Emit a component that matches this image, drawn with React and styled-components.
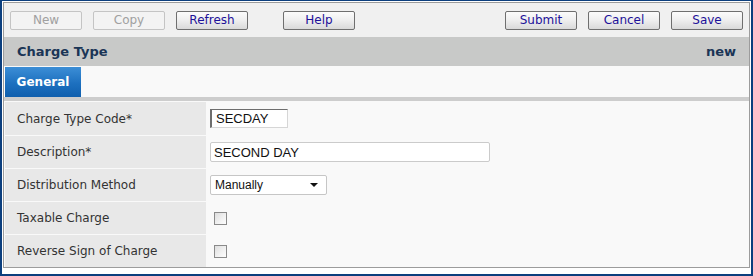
import React from "react";
import styled, { createGlobalStyle } from "styled-components";

const GlobalStyle = createGlobalStyle`
  html, body {
    margin: 0;
    padding: 0;
    background: #ffffff;
  }
  body {
    font-family: "DejaVu Sans", Verdana, sans-serif;
  }
`;

const Frame = styled.div`
  box-sizing: border-box;
  width: 753px;
  height: 276px;
  border: 2px solid #0c3f7e;
  border-top-width: 1px;
  background: #ffffff;
  padding: 1px;
`;

const Panel = styled.div`
  border: 1px solid #9c9c9c;
  background: #f9f9f9;
`;

const Toolbar = styled.div`
  display: flex;
  align-items: center;
  height: 34px;
  padding: 0 6px 0 6px;
  background: #f0f0f0;
`;

const ButtonGroup = styled.div`
  display: flex;
  gap: 11px;
  margin-left: ${(p) => p.$offset || 0}px;
`;

const Spacer = styled.div`
  flex: 1;
`;

const Button = styled.button`
  box-sizing: border-box;
  width: 72px;
  height: 19px;
  padding: 0;
  border: 1px solid ${(p) => (p.disabled ? "#c4c4c4" : "#6f6f6f")};
  border-radius: 2px;
  background: ${(p) =>
    p.disabled
      ? "#f3f3f3"
      : "linear-gradient(#fbfbfb 0%, #f0f0f0 45%, #d9d9d9 100%)"};
  color: ${(p) => (p.disabled ? "#a0a0a0" : "#1d1199")};
  font-family: "DejaVu Sans", Verdana, sans-serif;
  font-size: 12px;
  line-height: 17px;
  cursor: default;
`;

const Header = styled.div`
  display: flex;
  justify-content: space-between;
  align-items: center;
  height: 28px;
  padding: 0 13px 1px 13px;
  background: #c8c9c8;
  color: #1b3556;
  font-size: 13px;
  font-weight: bold;
`;

const TabStrip = styled.div`
  display: flex;
  height: 30px;
  padding: 1px 0 0 1px;
  background: #f9f9f9;
  border-bottom: 4px solid #cdcdcd;
`;

const Tab = styled.div`
  display: flex;
  align-items: center;
  justify-content: center;
  width: 76px;
  background: linear-gradient(#3c8ed6 0%, #1d70bf 55%, #0f5fae 100%);
  color: #ffffff;
  font-size: 12px;
  font-weight: bold;
`;

const Form = styled.div`
  padding-top: 1px;
`;

const Row = styled.div`
  display: grid;
  grid-template-columns: 201px 1fr;
  height: 33px;
  border-top: ${(p) => (p.$first ? "none" : "1px solid #f9f9f9")};
  box-sizing: border-box;
  margin-left: 1px;
`;

const Label = styled.div`
  display: flex;
  align-items: center;
  padding-left: 12px;
  background: #e8e8e8;
  color: #333333;
  font-size: 12px;
`;

const Value = styled.div`
  display: flex;
  align-items: center;
  padding-left: 4px;
  background: #f9f9f9;
`;

const TextBox = styled.div`
  box-sizing: border-box;
  width: ${(p) => p.$width}px;
  height: ${(p) => (p.$inset ? 19 : 20)}px;
  margin-top: ${(p) => (p.$inset ? -1 : 0)}px;
  display: flex;
  align-items: center;
  padding-left: ${(p) => (p.$inset ? 4 : 3)}px;
  background: #ffffff;
  border: 1px solid #cbcbcb;
  border-radius: ${(p) => (p.$inset ? 0 : 2)}px;
  ${(p) =>
    p.$inset &&
    `border-color: #6e6e6e #d6d6d6 #d6d6d6 #6e6e6e; border-width: 1px 1px 1px 2px;`}
  color: #111111;
  font-family: "Liberation Sans", Arial, sans-serif;
  font-size: 13px;
`;

const SelectBox = styled.div`
  box-sizing: border-box;
  width: 117px;
  height: 20px;
  display: flex;
  align-items: center;
  justify-content: space-between;
  padding: 0 8px 0 4px;
  background: #ffffff;
  border: 1px solid #c6c6c6;
  border-radius: 2px;
  color: #111111;
  font-family: "Liberation Sans", Arial, sans-serif;
  font-size: 12px;
`;

const Caret = styled.span`
  width: 0;
  height: 0;
  border-left: 4px solid transparent;
  border-right: 4px solid transparent;
  border-top: 4px solid #111111;
`;

const CheckBox = styled.span`
  box-sizing: border-box;
  display: inline-block;
  width: 13px;
  height: 13px;
  margin-left: 4px;
  margin-top: 1px;
  border: 1px solid #8a8a8a;
  background: linear-gradient(135deg, #dedede 0%, #f2f2f2 60%, #fdfdfd 100%);
`;

const fields = [
  { label: "Charge Type Code*", type: "code", value: "SECDAY" },
  { label: "Description*", type: "text", value: "SECOND DAY" },
  { label: "Distribution Method", type: "select", value: "Manually" },
  { label: "Taxable Charge", type: "check" },
  { label: "Reverse Sign of Charge", type: "check" },
];

function Field({ field }) {
  if (field.type === "code")
    return (
      <TextBox $width={78} $inset>
        {field.value}
      </TextBox>
    );
  if (field.type === "text") return <TextBox $width={280}>{field.value}</TextBox>;
  if (field.type === "select")
    return (
      <SelectBox>
        {field.value}
        <Caret />
      </SelectBox>
    );
  return <CheckBox />;
}

export default function App() {
  return (
    <>
      <GlobalStyle />
      <Frame>
        <Panel>
          <Toolbar>
            <ButtonGroup>
              <Button disabled>New</Button>
              <Button disabled>Copy</Button>
              <Button>Refresh</Button>
            </ButtonGroup>
            <ButtonGroup $offset={35}>
              <Button>Help</Button>
            </ButtonGroup>
            <Spacer />
            <ButtonGroup>
              <Button>Submit</Button>
              <Button>Cancel</Button>
              <Button>Save</Button>
            </ButtonGroup>
          </Toolbar>
          <Header>
            <span>Charge Type</span>
            <span>new</span>
          </Header>
          <TabStrip>
            <Tab>General</Tab>
          </TabStrip>
          <Form>
            {fields.map((f, i) => (
              <Row key={f.label} $first={i === 0}>
                <Label>{f.label}</Label>
                <Value>
                  <Field field={f} />
                </Value>
              </Row>
            ))}
          </Form>
        </Panel>
      </Frame>
    </>
  );
}
